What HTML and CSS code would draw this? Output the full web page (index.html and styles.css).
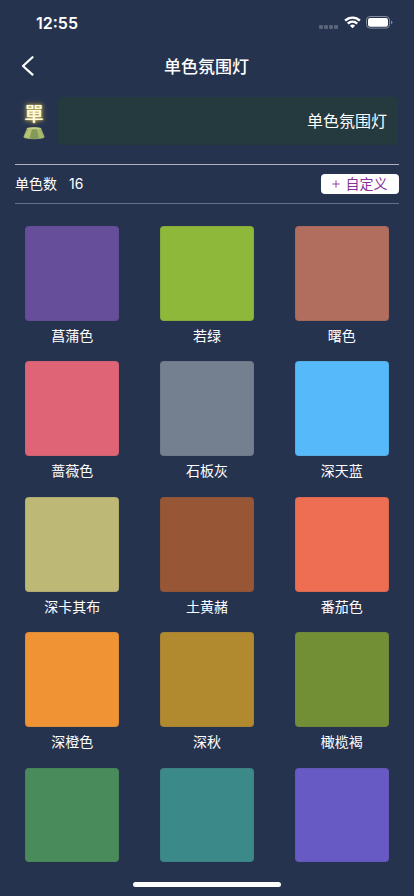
FILE: index.html
```html
<!DOCTYPE html>
<html lang="zh-CN">
<head>
<meta charset="utf-8">
<title>单色氛围灯</title>
<link rel="stylesheet" href="styles.css">
</head>
<body>
<div class="status">
  <span class="time">12:55</span>
  <div class="status-icons">
    <span class="dots"><i></i><i></i><i></i><i></i></span>
    <svg class="wifi" width="17" height="13" viewBox="0 0 17 13"><g fill="none" stroke="#fff" stroke-width="2.4"><path d="M1.1 4.7a10.400 10.400 0 0 1 14.800 0"/><path d="M3.800 7.600a6.600 6.600 0 0 1 9.400 0"/></g><path d="M8.500 12.300 5.900 9.700a3.700 3.700 0 0 1 5.200 0z" fill="#fff"/></svg>
    <svg class="battery" width="27" height="13" viewBox="0 0 27 13"><rect x=".5" y=".5" width="23" height="11.600" rx="3.500" fill="none" stroke="#818a9e"/><rect x="2" y="2" width="20" height="8.700" rx="2.200" fill="#fff"/><path d="M25 4.400q1.400.6 1.400 1.900T25 8.300z" fill="#818a9e"/></svg>
  </div>
</div>
<header class="nav">
  <svg class="back" width="14" height="20" viewBox="0 0 14 20"><path d="M11.500 1.200 2 10l9.500 8.600" fill="none" stroke="#fff" stroke-width="2.200" stroke-linecap="round" stroke-linejoin="round"/></svg>
  <h1>单色氛围灯</h1>
</header>
<section class="lamp">
  <div class="lamp-icon">
    <span class="glyph">單</span>
    <svg class="base" width="22" height="13" viewBox="0 0 22 13">
      <path d="M4 1Q11-.3 18 1l3.500 8.500q.3 1.200-1.300 1.700Q11 13.200 1.800 11.200.2 10.700.5 9.500z" fill="#98aa64"/>
      <path d="M4 1Q11-.3 18 1l-1 1.600H5z" fill="#c3d184"/>
      <path d="M5 2.600 1 10l5 1.500 3-9z" fill="#b5c475"/>
      <path d="m9 2.500 5 0 1.500 9.200-8.500 .2z" fill="#849958"/>
      <path d="m14 2.500 3 0 3.500 8-4 1z" fill="#a7b96c"/>
    </svg>
  </div>
  <div class="lamp-name">单色氛围灯</div>
</section>
<section class="toolbar">
  <span class="label">单色数</span><span class="count">16</span>
  <button class="custom"><svg width="8" height="8" viewBox="0 0 8 8"><path d="M4 .3v7.400M.3 4h7.400" stroke="#88309c" stroke-width=".9"/></svg><span>自定义</span></button>
</section>
<main class="grid">
  <div class="item"><div class="swatch c1"></div><span>菖蒲色</span></div>
  <div class="item"><div class="swatch c2"></div><span>若绿</span></div>
  <div class="item"><div class="swatch c3"></div><span>曙色</span></div>
  <div class="item"><div class="swatch c4"></div><span>蔷薇色</span></div>
  <div class="item"><div class="swatch c5"></div><span>石板灰</span></div>
  <div class="item"><div class="swatch c6"></div><span>深天蓝</span></div>
  <div class="item"><div class="swatch c7"></div><span>深卡其布</span></div>
  <div class="item"><div class="swatch c8"></div><span>土黄赭</span></div>
  <div class="item"><div class="swatch c9"></div><span>番茄色</span></div>
  <div class="item"><div class="swatch c10"></div><span>深橙色</span></div>
  <div class="item"><div class="swatch c11"></div><span>深秋</span></div>
  <div class="item"><div class="swatch c12"></div><span>橄榄褐</span></div>
  <div class="item last"><div class="swatch c13"></div></div>
  <div class="item last"><div class="swatch c14"></div></div>
  <div class="item last"><div class="swatch c15"></div></div>
</main>
<div class="home"></div>
</body>
</html>
```
FILE: styles.css
```css
* { box-sizing: border-box; }
body {
  margin: 0;
  width: 414px;
  height: 896px;
  overflow: hidden;
  display: flex;
  flex-direction: column;
  background: #26334f;
  color: #fff;
  font-family: Inter, "Noto Sans CJK SC", sans-serif;
}
.status {
  height: 44px;
  flex: none;
  padding: 0 21px 0 36px;
  display: flex;
  justify-content: space-between;
  align-items: center;
}
.time { font-size: 16px; font-weight: 600; line-height: 20px; padding-top: 2px; }
.status-icons { display: flex; align-items: center; padding-top: 1px; }
.dots { display: flex; gap: 1px; padding-top: 8px; margin-right: 6px; }
.dots i { width: 4px; height: 4px; border-radius: 1.300px; background: #5b667c; }
.wifi { margin-right: 5px; }
.nav {
  height: 44px;
  flex: none;
  display: grid;
  grid-template-columns: 60px 1fr 60px;
  align-items: center;
}
.back { margin-left: 21px; }
.nav h1 { margin: 2px 1px 0 0; font-size: 17px; line-height: 24px; font-weight: 500; text-align: center; }
.lamp { display: flex; height: 48px; margin: 9px 16px 0 15px; flex: none; }
.lamp-icon { width: 38px; margin-right: 5px; display: flex; flex-direction: column; align-items: center; padding-top: 7px; }
.glyph {
  height: 23px;
  font-size: 19.500px;
  line-height: 20px;
  font-weight: 500;
  color: #fffbe0;
  text-shadow: 0 0 2px #d8c65a, 0 0 4px #b5a450, 0 0 7px #8c824d;
}
.base { flex: none; }
.lamp-name {
  flex: 1;
  border-radius: 4px;
  background: #243a3f;
  padding-right: 11px;
  text-align: right;
  font-size: 16px;
  line-height: 48px;
}
.toolbar {
  height: 40px;
  flex: none;
  margin: 19px 15px 0;
  border-top: 1px solid #adb2bd;
  border-bottom: 1px solid #667087;
  display: flex;
  align-items: center;
  font-size: 14px;
}
.label, .count { margin-top: -2px; }
.count { margin-left: 12px; }
.custom {
  margin-left: auto;
  width: 78px;
  height: 20px;
  padding: 0 1px 0 0;
  border: 0;
  border-radius: 4px;
  background: #fff;
  color: #88309c;
  font: 14px/20px "Noto Sans CJK SC", sans-serif;
  display: flex;
  align-items: center;
  justify-content: center;
  gap: 6px;
}
.custom span { margin-top: -2px; }
.grid {
  height: 658px;
  flex: none;
  overflow: hidden;
  padding: 22px 25.300px 0;
  display: grid;
  grid-template-columns: repeat(3, 94px);
  grid-auto-rows: 135.400px;
  justify-content: space-between;
}
.item { text-align: center; font-size: 14px; line-height: 20px; }
.item span { display: block; margin: 5px -10px 0; }
.swatch { height: 95px; border-radius: 4px; border: 1px solid rgba(70, 70, 80, .1); }
.last .swatch { height: 94.400px; }
.c1 { background: #664e9a; }
.c2 { background: #8db839; }
.c3 { background: #b16d5d; }
.c4 { background: #df6576; }
.c5 { background: #747f90; }
.c6 { background: #56bafa; }
.c7 { background: #bdb876; }
.c8 { background: #975635; }
.c9 { background: #ed6e52; }
.c10 { background: #f09335; }
.c11 { background: #b1892f; }
.c12 { background: #738f36; }
.c13 { background: #4a8b5c; }
.c14 { background: #3c8989; }
.c15 { background: #685ac5; }
.home { width: 148px; height: 5px; margin: 20px auto 0; border-radius: 3px; background: #fff; flex: none; }
```
